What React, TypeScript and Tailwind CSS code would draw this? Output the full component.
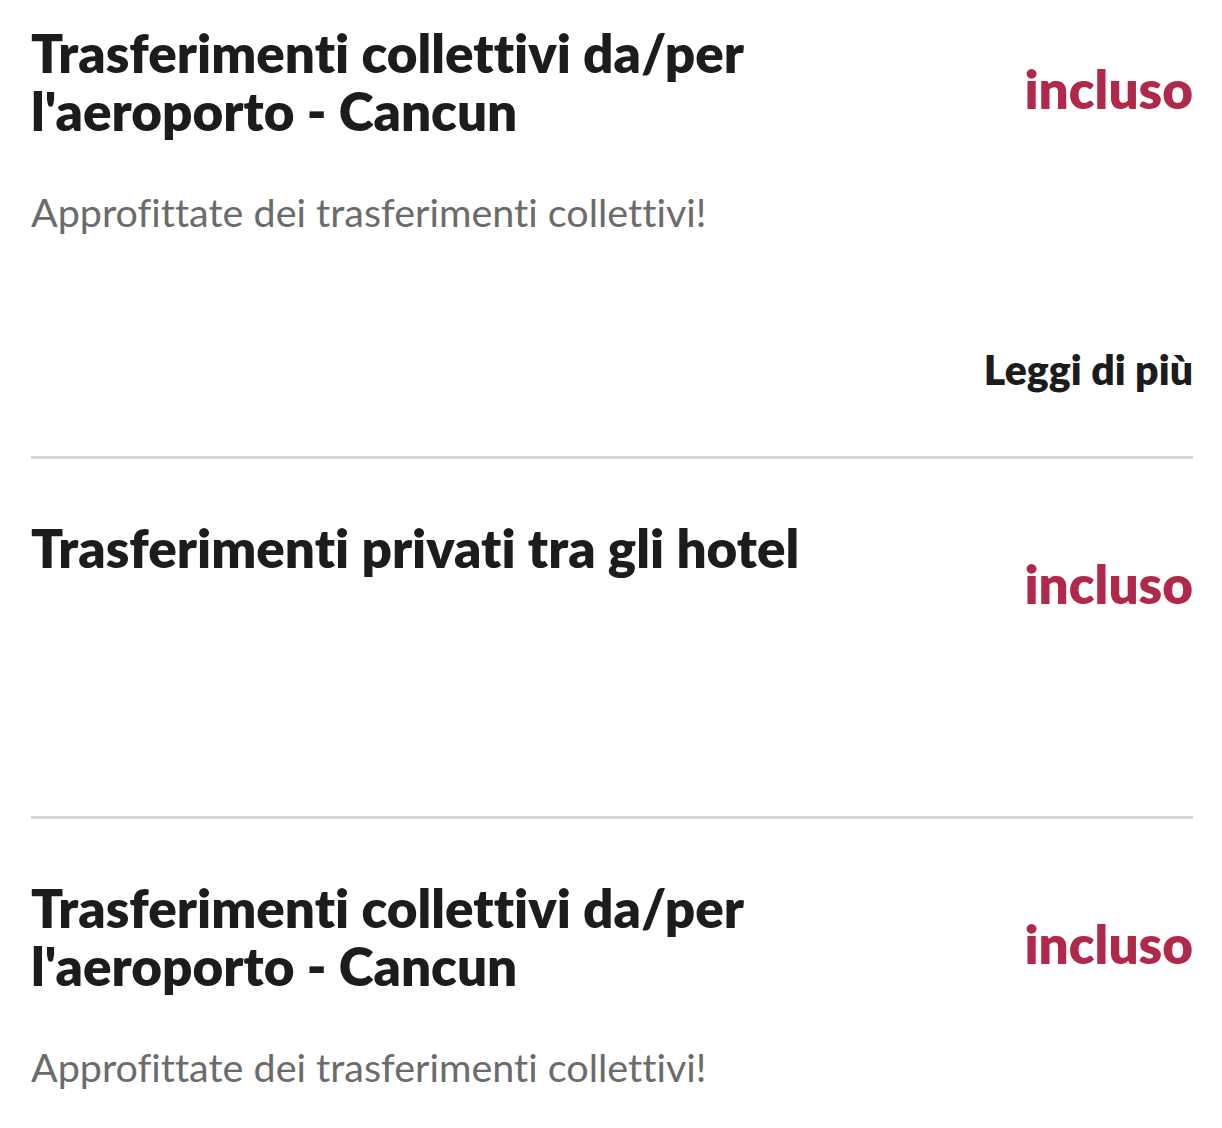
const font = { fontFamily: 'Lato, "Noto Sans", sans-serif' };

type Item = {
  title: string;
  desc?: string;
  more?: boolean;
};

const items: Item[] = [
  { title: "Trasferimenti collettivi da/per l'aeroporto - Cancun", desc: 'Approfittate dei trasferimenti collettivi!', more: true },
  { title: 'Trasferimenti privati tra gli hotel' },
  { title: "Trasferimenti collettivi da/per l'aeroporto - Cancun", desc: 'Approfittate dei trasferimenti collettivi!' },
];

function Row({ item, first }: { item: Item; first: boolean }) {
  return (
    <div className={first ? 'pt-[24px]' : 'pt-[60px] border-t-[3px] border-[#d6d6d6]'}>
      <div className="flex justify-between items-center min-h-[124px]">
        <h2 className="self-start w-[820px] text-[53px] leading-[58px] font-extrabold text-[#1c1c1c]">{item.title}</h2>
        <span className="text-[53px] leading-[56px] font-extrabold text-[#b0284a] mt-[6px]">incluso</span>
      </div>
      {item.desc ? (
        <p className="mt-[40px] text-[39.5px] leading-[48px] text-[#6b6b6b]">{item.desc}</p>
      ) : (
        <div className="h-[173px]" />
      )}
      {item.more ? (
        <div className="flex justify-end mt-[110px] pb-[62px]">
          <button className="text-[41px] leading-[48px] font-extrabold text-[#1c1c1c]">Leggi di più</button>
        </div>
      ) : null}
    </div>
  );
}

export default function App() {
  return (
    <div className="min-h-screen bg-white pl-[31px] pr-[29px] overflow-hidden [font-variant-ligatures:none]" style={font}>
      {items.map((it, i) => (
        <Row key={i} item={it} first={i === 0} />
      ))}
    </div>
  );
}
